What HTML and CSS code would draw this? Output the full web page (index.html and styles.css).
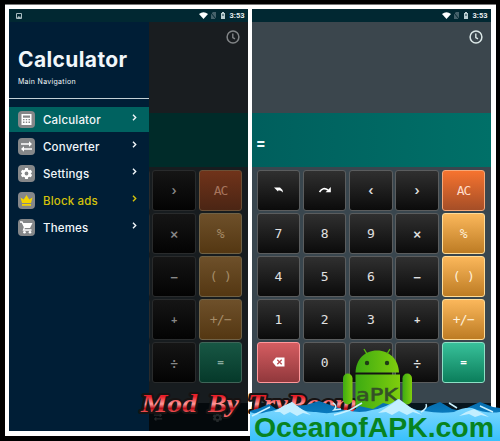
FILE: index.html
```html
<!DOCTYPE html>
<html lang="en">
<head>
<meta charset="utf-8">
<title>Calculator</title>
<link rel="stylesheet" href="styles.css">
</head>
<body>
<svg class="defs" width="0" height="0" aria-hidden="true">
  <symbol id="status" viewBox="0 0 28 10"><path fill="#fff" d="M0 3Q4.500-.5 9 3L4.500 8z"/><path fill="#45616a" d="M12 3l2-2h3v7h-5z"/><path stroke="#032832" d="M12 2l5 6"/><path fill="#b9cdd0" d="M22 2h1V1h2v1h1v6h-4z"/><path fill="#173c46" d="M23.500 3h1v2h-1z"/></symbol>
  <symbol id="clock" viewBox="0 0 14 14"><circle cx="7" cy="7" r="5.900" fill="none" stroke="currentColor" stroke-width="1.500"/><path d="M6.800 3.500v4l2.200 1.300" fill="none" stroke="currentColor" stroke-width="1.400"/></symbol>
  <symbol id="swap" viewBox="0 0 12 12"><path fill="currentColor" d="M1 3h7V1l3 2.800-3 2.700V4.500H1zM11 7.500H4v-2L1 8.300 4 11V9h7z"/></symbol>
  <symbol id="gear" viewBox="0 0 24 24"><path fill="currentColor" fill-rule="evenodd" d="M9.500 2h5l.6 3 2 1.100 2.800-1 2.500 4.300-2.300 2v1.200l2.300 2-2.500 4.300-2.800-1-2 1.100-.6 3h-5l-.6-3-2-1.100-2.800 1-2.500-4.300 2.300-2v-1.200l-2.300-2 2.500-4.300 2.800 1 2-1.100zM12 8.500a3.500 3.500 0 100 7 3.500 3.500 0 000-7z"/></symbol>
</svg>
<main class="frame">
  <section class="screen dimmed">
    <header class="status"><svg width="28" height="10"><use href="#status"/></svg><span>3:53</span></header>
    <div class="display"><svg class="clock" width="14" height="14"><use href="#clock"/></svg></div>
    <div class="result"></div>
    <div class="keys">
      <i class="key c3"></i><b class="key c4 ang">›</b><b class="key ac">AC</b>
      <i class="key c3"></i><b class="key c4 sym">×</b><b class="key gold">%</b>
      <i class="key c3"></i><b class="key c4 sym">−</b><b class="key gold">( )</b>
      <i class="key c3"></i><b class="key c4 plus">+</b><b class="key gold">+/−</b>
      <i class="key c3"></i><b class="key c4 sym">÷</b><b class="key green">=</b>
    </div>
    <footer class="nav"><svg width="10" height="10"><use href="#swap"/></svg><svg width="11" height="11"><use href="#gear"/></svg></footer>
    <aside class="drawer">
      <div class="picture"><svg width="6" height="6" viewBox="0 0 6 6"><path fill="none" stroke="#a9bbc0" d="M.5.5h5v5h-5z"/><path fill="#a9bbc0" d="M1 5l1.500-2 1 1L4 3l1 2z"/></svg></div>
      <div class="heading"><h1>Calculator</h1><p>Main Navigation</p></div>
      <ul class="menu">
        <li class="active"><svg class="ico" viewBox="0 0 17 17"><path fill="#fff" fill-rule="evenodd" d="M3.500 3h10v11h-10zM5 4.500v2.300h7V4.500zM5 8v1.200h1.500V8zm2.800 0v1.200h1.400V8zM10.500 8v1.200H12V8zM5 10.500V12h1.500v-1.500zm2.800 0V12h1.400v-1.500zm2.700 0V12H12v-1.500z"/></svg><span>Calculator</span><svg class="chev" viewBox="0 0 5 7"><path d="M1 .8l2.700 2.700L1 6.200"/></svg></li>
        <li><svg class="ico" viewBox="0 0 17 17"><path fill="#fff" d="M3 5.200h8V3.200L14 6l-3 2.700V6.700H3zM14 10.200H6V8.300L3 11l3 2.800v-2h8z"/></svg><span>Converter</span><svg class="chev" viewBox="0 0 5 7"><path d="M1 .8l2.700 2.700L1 6.200"/></svg></li>
        <li><svg class="ico white" viewBox="0 0 17 17"><use href="#gear" x="2" y="2" width="13" height="13"/></svg><span>Settings</span><svg class="chev" viewBox="0 0 5 7"><path d="M1 .8l2.700 2.700L1 6.200"/></svg></li>
        <li class="ads"><svg class="ico" viewBox="0 0 17 17"><path fill="#f4d400" d="M4 11L2.500 5.500l3.200 2L8.500 3l2.800 4.500 3.200-2L13 11zM4 12h9v1.800H4z"/></svg><span>Block ads</span><svg class="chev" viewBox="0 0 5 7"><path d="M1 .8l2.700 2.700L1 6.200"/></svg></li>
        <li><svg class="ico" viewBox="0 0 17 17"><path fill="none" stroke="#fff" stroke-width="1.300" d="M2 3h2l2.500 5L5.500 11h8"/><path fill="#fff" d="M4.500 4h10L12 9H6.500z"/><circle cx="6.500" cy="13.200" r="1.300" fill="#fff"/><circle cx="12" cy="13.200" r="1.300" fill="#fff"/></svg><span>Themes</span><svg class="chev" viewBox="0 0 5 7"><path d="M1 .8l2.700 2.700L1 6.200"/></svg></li>
      </ul>
    </aside>
  </section>
  <section class="screen">
    <header class="status"><svg width="28" height="10"><use href="#status"/></svg><span>3:53</span></header>
    <div class="display"><svg class="clock" width="14" height="14"><use href="#clock"/></svg></div>
    <div class="result"><span>=</span></div>
    <div class="keys">
      <b class="key"><svg width="12" height="10" viewBox="0 0 12 10"><path fill="#fff" d="M2 2.500h6Q10.500 4 11 7.500 9 5.200 6.500 5.200L6 6.500z"/></svg></b><b class="key"><svg width="14" height="10" viewBox="0 0 14 10"><path fill="none" stroke="#fff" stroke-width="1.600" d="M1.500 7Q5 1.500 10 5"/><path fill="#fff" d="M12.800 2v5.200H7.600z"/></svg></b><b class="key ang">‹</b><b class="key ang">›</b><b class="key ac">AC</b>
      <b class="key">7</b><b class="key">8</b><b class="key">9</b><b class="key sym">×</b><b class="key gold">%</b>
      <b class="key">4</b><b class="key">5</b><b class="key">6</b><b class="key sym">−</b><b class="key gold">( )</b>
      <b class="key">1</b><b class="key">2</b><b class="key">3</b><b class="key plus">+</b><b class="key gold">+/−</b>
      <b class="key red"><svg width="13" height="10" viewBox="0 0 13 10"><path fill="#fff" d="M4 .5h8.500v9H4L.5 5z"/><path stroke="#b94b50" stroke-width="1.300" d="M5.300 2.800l4.400 4.400m0-4.400L5.300 7.200"/></svg></b><b class="key">0</b><b class="key"></b><b class="key sym">÷</b><b class="key green">=</b>
    </div>
    <footer class="nav"></footer>
  </section>
</main>
<svg class="overlay" width="500" height="441" viewBox="0 0 500 441">
  <defs>
    <linearGradient id="red" x1="0" y1="0" x2="0" y2="1"><stop offset=".25" stop-color="#e8202a"/><stop offset=".52" stop-color="#ff9c9c"/><stop offset=".68" stop-color="#b80d16"/><stop offset=".85" stop-color="#ff6668"/></linearGradient>
    <linearGradient id="sea" x1="0" y1="0" x2="0" y2="1"><stop offset="0" stop-color="#8ddcff"/><stop offset="1" stop-color="#38c0fc"/></linearGradient>
    <linearGradient id="wave" x1="0" y1="0" x2="0" y2="1"><stop offset="0" stop-color="#056cae"/><stop offset="1" stop-color="#159ee2"/></linearGradient>
    <linearGradient id="robot"><stop offset="0" stop-color="#3dab12"/><stop offset="1" stop-color="#7fcd0d"/></linearGradient>
  </defs>
  <g class="mod">
    <text x="141" y="412" textLength="56" lengthAdjust="spacingAndGlyphs">Mod</text>
    <text x="208" y="412" textLength="31" lengthAdjust="spacingAndGlyphs">By</text>
    <text x="248" y="412" textLength="109" lengthAdjust="spacingAndGlyphs">TryRoom</text>
  </g>
  <g fill="url(#robot)">
    <path d="M355.500 372.500C356 360 364 350.500 377 350.500s21.500 9.500 22 22z"/>
    <path d="M355.500 374.500h44.500v31q0 5-5 5h-34.500q-5 0-5-5z"/>
    <rect x="343" y="373.500" width="9.500" height="31" rx="4.700"/><rect x="402.500" y="373.500" width="9.500" height="31" rx="4.700"/>
  </g>
  <path d="M367 354l-3-5M387 354l3-5" stroke="#58ba10" stroke-width="1.400"/>
  <circle cx="367" cy="363" r="2.200" fill="#1f3d16"/><circle cx="387" cy="363" r="2.200" fill="#1f3d16"/>
  <text class="apk" x="356" y="401" textLength="42" lengthAdjust="spacingAndGlyphs">aPK</text>
  <path fill="url(#wave)" d="M250 411l10-3 9-4 7 5 15-3 15-1 13-4 17 6 15 6 8-7 14 3 10-6 22 5 16 3 9-5 10-4 12 7 9 2 10-5 9-4 13 5 7 1v36H250z"/>
  <path fill="url(#sea)" d="M250 412q8 3 16 0 14-2 26-10 10 11 24 10 14 3 30-2 14 4 26 0 14-2 26-11 13 12 26 12 16 3 30 1 10-5 18-4 14 6 28 4v29H250z"/>
  <path fill="#c3efff" d="M274 412l9-6 9-4 8 6 11 7-8-2-6 3-7-4-6 3-4-3zM378 413l11-7 10-7 11 8 12 8-9-3-6 3-8-4-7 4-6-3zM459 416l7-4 8-3 8 4 7 4-8-2-6 2-6-3z"/>
  <g fill="none" stroke="#c9f1ff" stroke-width="1.500"><path d="M252 416q10-5 18-9M333 403q5 3 1 7l7-1M421 412q7-4 5-8M449 403l8 5M334 415q8-2 16-5l12-7M480 406l13 6"/></g>
  <text class="ocean" x="254" y="436.500" textLength="240" lengthAdjust="spacingAndGlyphs">OceanofAPK.com</text>
</svg>
</body>
</html>
```
FILE: styles.css
```css
* { box-sizing: border-box; }
body { margin: 0; width: 500px; height: 441px; padding: 4px 4.5px 0 5px; background: #000; overflow: hidden; position: relative; font-family: Inter, "Liberation Sans", sans-serif; }
.defs { position: absolute; }
.frame { display: flex; gap: 4.5px; height: 432px; padding: 4.4px 4.5px 4.500px 4px; background: #fff; border-top: 1px solid #777; }
.screen { position: relative; width: 238.500px; height: 421.500px; background: #39464e; flex: none; overflow: hidden; }
.status { height: 13px; background: #012832; display: flex; align-items: center; justify-content: flex-end; gap: 3px; padding-right: 4px; color: #e8eef0; font: 700 7.500px Roboto, sans-serif; }
.status span { width: 14px; white-space: nowrap; }
.display { height: 90.500px; background: #3b464d; display: flex; justify-content: flex-end; padding: 7.500px 7.500px 0 0; color: #dce8e8; }
.result { height: 54px; background: linear-gradient(90deg, #005f5d, #007068); color: #eefafa; font-weight: 800; font-size: 14px; padding: 22px 0 0 4px; line-height: 16px; }
.keys { height: 236.500px; padding: 3px 4.500px 0; display: grid; grid-template-columns: repeat(5, 43.700px); grid-auto-rows: 41px; gap: 2px 2.600px; }
.key { display: flex; align-items: center; justify-content: center; border: 1px solid #5b5d5e; border-radius: 3px; background: linear-gradient(#303030, #0b0b0b); color: #e1e1e1; font: 400 13px "DejaVu Sans Mono", monospace; white-space: pre; }
.key.sym { font: 500 14px Inter, sans-serif; }
.key.ang { font: 600 12.500px Inter, sans-serif; }
.key.plus { font-size: 10px; font-weight: 700; }
.c3 { grid-column: 3; }
.c4 { grid-column: 4; }
.key.ac { background: linear-gradient(#f6732f, #a54e27); border-color: #f6a878; color: #ffdcc8; letter-spacing: -1px; }
.key.gold { background: linear-gradient(#fbb75b, #bd7c24); border-color: #ffdc98; color: #fff0d8; letter-spacing: -.6px; }
.key.green { background: linear-gradient(#38c19a, #0b7e5b); border-color: #8ce0c5; color: #fff; font-size: 11px; font-weight: 700; }
.key.red { background: linear-gradient(#d55d61, #91383c); border-color: #ff989b; }
.nav { height: 27.500px; background: #07151d; }
.dimmed .display { background: #191d20; color: #808486; }
.dimmed .result { background: #002b29; }
.dimmed { background: #171c1f; }
.dimmed .key { background: linear-gradient(#151515, #030303); border-color: #292b2c; color: #888; }
.dimmed .key.ac { background: linear-gradient(#70331a, #4b2514); border-color: #6c5036; color: #a7745d; }
.dimmed .key.gold { background: linear-gradient(#6e502a, #543712); border-color: #706246; color: #a58c68; }
.dimmed .key.green { background: linear-gradient(#185744, #05392a); border-color: #3f6558; color: #8aaca0; }
.dimmed .nav { background: #04090c; color: #24292b; display: flex; justify-content: flex-end; align-items: center; gap: 49px; padding-right: 25px; }
.drawer { position: absolute; left: 0; top: 0; width: 139.500px; height: 100%; background: #001e36; color: #f1f7fa; }
.picture { height: 13px; background: #012832; padding: 3.500px 0 0 6.500px; line-height: 0; }
.heading { height: 76.500px; padding: 24px 0 0 9px; border-bottom: 1.500px solid #c3d0d5; }
h1 { margin: 0; font-size: 21px; line-height: 27px; font-weight: 700; letter-spacing: .38px; }
p { margin: 4px 0 0; font-size: 7px; line-height: 9px; letter-spacing: .3px; }
.menu { list-style: none; margin: 0; padding: 8.500px 0 0; }
.menu li { display: flex; align-items: center; height: 25px; margin-bottom: 2px; padding: 0 12px 0 9px; font-size: 11.500px; font-weight: 500; letter-spacing: .18px; }
.menu li.active { background: #006260; }
.menu .ads { color: #d4c20b; }
.ico { width: 17px; height: 17px; background: #858789; border-radius: 4px; margin-right: 8px; }
.white { color: #fff; }
.chev { width: 5px; height: 7px; margin: -4px 0 0 auto; fill: none; stroke: currentColor; stroke-width: 1.400; }
.overlay { position: absolute; left: 0; top: 0; }
.mod { font: italic 700 25px "Liberation Serif", serif; fill: url(#red); stroke: #171313; stroke-width: 4px; stroke-linejoin: round; paint-order: stroke; }
.apk { font: 400 18px "DejaVu Sans", sans-serif; fill: #345027; stroke: #345027; stroke-width: .6px; }
.ocean { font: 700 27px "Liberation Sans", sans-serif; fill: #078321; }
```
